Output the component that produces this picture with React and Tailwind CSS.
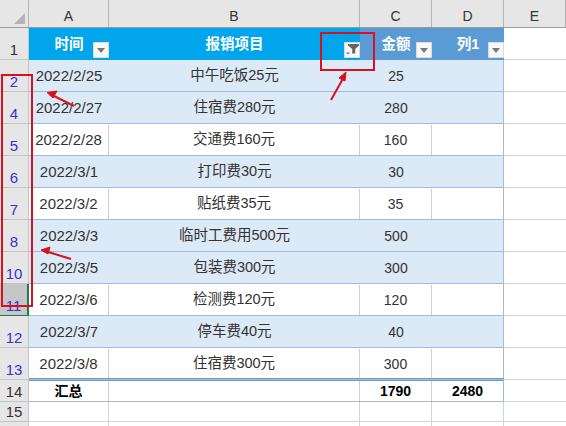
const font = { fontFamily: '"Liberation Sans", "Noto Sans CJK SC", sans-serif' };

const rows = [
  { no: 2, date: '2022/2/25', item: '中午吃饭25元', amount: 25, band: true },
  { no: 4, date: '2022/2/27', item: '住宿费280元', amount: 280, band: true },
  { no: 5, date: '2022/2/28', item: '交通费160元', amount: 160 },
  { no: 6, date: '2022/3/1', item: '打印费30元', amount: 30, band: true },
  { no: 7, date: '2022/3/2', item: '贴纸费35元', amount: 35 },
  { no: 8, date: '2022/3/3', item: '临时工费用500元', amount: 500, band: true },
  { no: 10, date: '2022/3/5', item: '包装费300元', amount: 300, band: true },
  { no: 11, date: '2022/3/6', item: '检测费120元', amount: 120, active: true },
  { no: 12, date: '2022/3/7', item: '停车费40元', amount: 40, band: true },
  { no: 13, date: '2022/3/8', item: '住宿费300元', amount: 300 },
];

const FilterButton = ({ applied }) => (
  <span className="absolute right-0 top-[14px] flex h-[16px] w-[16px] items-center justify-center bg-[#f8f8f8] border border-[#dcdcdc]">
    {applied ? (
      <svg width="16" height="16" viewBox="0 0 16 16" className="shrink-0">
        <path d="M4 2h11v1.5L11.2 7v4.5H8.2V7L4 3.5z" fill="#666" />
        <path d="M2 10.5h4l-2 2z" fill="#777" />
      </svg>
    ) : (
      <svg width="8" height="5" viewBox="0 0 8 5">
        <path d="M0 0h8L4 5z" fill="#777" />
      </svg>
    )}
  </span>
);

const ColHead = ({ label, width }) => (
  <div className={`${width} flex shrink-0 items-end justify-center border-r border-[#b4b4b4] text-[14px] leading-[22px] text-[#333]`}>
    {label}
  </div>
);

const RowHead = ({ no, plain, active, height = 'h-[32px]' }) => (
  <div
    className={`${height} flex w-[29px] shrink-0 items-end justify-center border-b border-r text-[15px] leading-[18px] ${
      active ? 'bg-[#c6c6c6] border-[#1f7a4d] border-r-2' : 'bg-[#e6e6e6] border-[#c4c4c4]'
    } ${plain ? 'text-[#333]' : 'text-[#3a2fd0]'}`}
  >
    {no}
  </div>
);

const HeadCell = ({ width, color, label, applied }) => (
  <div className={`${width} ${color} relative flex shrink-0 items-start justify-center pt-[5px] text-[14.5px] font-bold leading-[22px] text-white`}>
    {label}
    <FilterButton applied={applied} />
  </div>
);

const DataRow = ({ row }) => {
  const bg = row.band ? 'bg-[#dce9f6]' : 'bg-white';
  const line = row.band ? '' : 'border-r border-[#d0d0d0]';
  return (
    <div className="flex h-[32px]">
      <RowHead no={row.no} active={row.active} />
      <div className={`flex w-[475px] shrink-0 items-center border-b border-r border-[#a3bcd6] pt-[1px] text-[#333] ${bg}`}>
        <div className={`${line} flex h-full w-[80px] shrink-0 items-center justify-center text-[15px]`}>{row.date}</div>
        <div className={`${line} flex h-full w-[251px] shrink-0 items-center justify-center text-[14.5px]`}>{row.item}</div>
        <div className={`${line} flex h-full w-[72px] shrink-0 items-center justify-center text-[14px]`}>{row.amount}</div>
        <div className="h-full flex-1" />
      </div>
      <div className="flex-1 border-b border-[#d4d4d4] bg-white" />
    </div>
  );
};

const EmptyRow = ({ no, height }) => (
  <div className={`flex ${height}`}>
    <RowHead no={no} plain height={height} />
    <div className="w-[80px] shrink-0 border-b border-r border-[#d4d4d4]" />
    <div className="w-[251px] shrink-0 border-b border-r border-[#d4d4d4]" />
    <div className="w-[72px] shrink-0 border-b border-r border-[#d4d4d4]" />
    <div className="w-[72px] shrink-0 border-b border-r border-[#d4d4d4]" />
    <div className="flex-1 border-b border-[#d4d4d4]" />
  </div>
);

export default function App() {
  return (
    <div className="relative h-[426px] w-[566px] overflow-hidden bg-white" style={font}>
      {/* column letters */}
      <div className="flex h-[28px] border-b border-[#9c9c9c] bg-[#e6e6e6]">
        <div className="relative w-[29px] shrink-0 border-r border-[#b4b4b4]">
          <svg className="absolute left-[13px] top-[12px]" width="13" height="13" viewBox="0 0 13 13">
            <path d="M12 1v11H1z" fill="#b5b5b5" />
          </svg>
        </div>
        <ColHead label="A" width="w-[80px]" />
        <ColHead label="B" width="w-[251px]" />
        <ColHead label="C" width="w-[72px]" />
        <ColHead label="D" width="w-[72px]" />
        <ColHead label="E" width="w-[62px]" />
      </div>

      {/* table header */}
      <div className="flex h-[32px]">
        <RowHead no={1} plain />
        <HeadCell width="w-[80px]" color="bg-[#00a5ec]" label="时间" />
        <HeadCell width="w-[251px]" color="bg-[#00a5ec]" label="报销项目" applied />
        <HeadCell width="w-[72px]" color="bg-[#5b9bd5]" label="金额" />
        <HeadCell width="w-[72px]" color="bg-[#5b9bd5]" label="列1" />
        <div className="flex-1 border-b border-[#d4d4d4] bg-white" />
      </div>

      {rows.map(row => <DataRow key={row.no} row={row} />)}

      {/* totals */}
      <div className="flex h-[22px]">
        <RowHead no={14} plain height="h-[22px]" />
        <div className="-mt-[2px] flex h-[24px] w-[475px] shrink-0 items-center border-t-[3px] border-double border-b border-r border-[#6f9cc6] border-b-[#a3bcd6] border-r-[#a3bcd6] text-[14px] font-bold text-black">
          <div className="flex h-full w-[80px] shrink-0 items-center justify-center border-r border-solid border-[#d0d0d0]">汇总</div>
          <div className="h-full w-[251px] shrink-0 border-r border-solid border-[#d0d0d0]" />
          <div className="flex h-full w-[72px] shrink-0 items-center justify-center border-r border-solid border-[#d0d0d0]">1790</div>
          <div className="flex h-full flex-1 items-center justify-center">2480</div>
        </div>
        <div className="flex-1 border-b border-[#d4d4d4]" />
      </div>
      <EmptyRow no={15} height="h-[20px]" />
      <EmptyRow no={16} height="h-[20px]" />

      {/* hand-drawn annotations */}
      <div className="absolute left-[1px] top-[74px] h-[233px] w-[32px] border-2 border-[#d9101f]" />
      <div className="absolute left-[320px] top-[32px] h-[39px] w-[55px] border-2 border-[#d9101f]" />
      <svg className="absolute left-0 top-0" width="566" height="426" viewBox="0 0 566 426" fill="none" stroke="#d9101f" strokeWidth="2">
        <path d="M74 106L50 94" />
        <path d="M47 92.5l10 -1.5l-4 7z" fill="#d9101f" strokeWidth="1" />
        <path d="M71 259L45 251" />
        <path d="M41 250l9 -3l-2 7z" fill="#d9101f" strokeWidth="1" />
        <path d="M331 100L345 75" />
        <path d="M346 72l-7 6l6 3z" fill="#d9101f" strokeWidth="1" />
      </svg>
    </div>
  );
}
